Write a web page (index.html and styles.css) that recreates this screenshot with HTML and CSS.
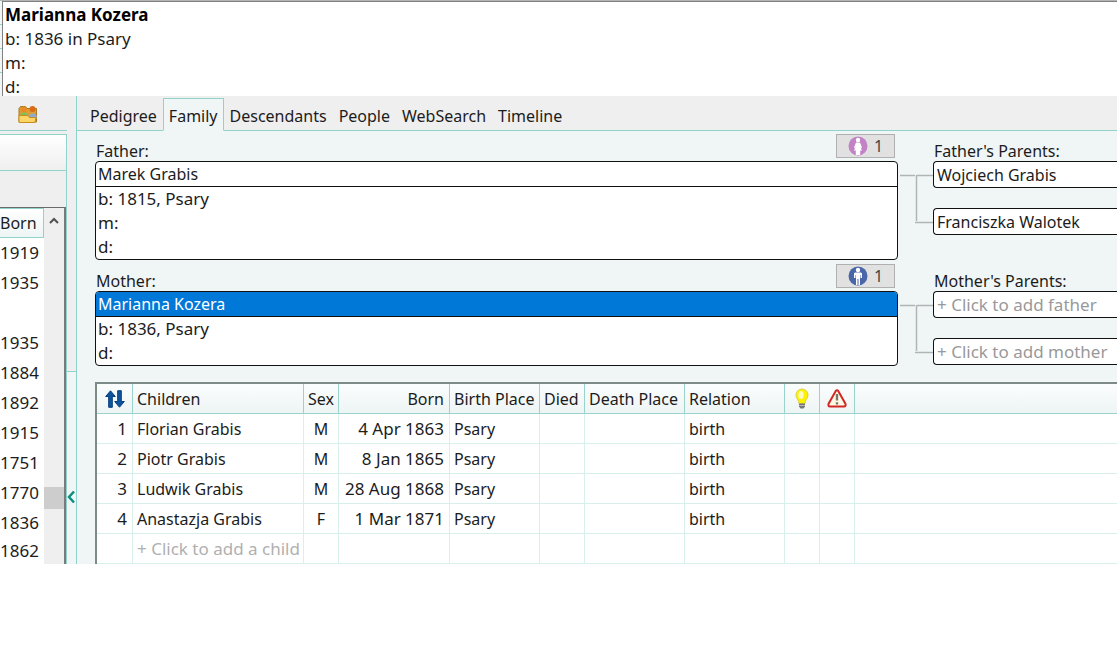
FILE: index.html
```html
<!DOCTYPE html>
<html lang="en">
<head>
<meta charset="utf-8">
<title>Family view</title>
<link rel="stylesheet" href="styles.css">
</head>
<body>
<header class="summary">
  <div class="ticks"><i></i><i></i><i></i></div>
  <div class="person">
    <strong>Marianna Kozera</strong>
    <span>b: 1836 in Psary</span>
    <span>m:</span>
    <span>d:</span>
  </div>
</header>
<div class="workspace">
  <aside class="index">
    <div class="tools">
      <button class="icon-button" aria-label="Open group">
        <svg width="20" height="19" viewBox="0 0 20 19">
          <path d="M1 17V3.500L2.500 1.500h5L9 3.500h9.500V17z" fill="#d9a03a" stroke="#a87822"/>
          <circle cx="6" cy="4.500" r="3" fill="#e98a22"/>
          <circle cx="14.500" cy="4" r="3" fill="#d96c18"/>
          <path d="M2 11.500c0-5.500 8-5.500 8 0z" fill="#7cc05a"/>
          <path d="M10.500 13c0-6 8.500-6 8.500 0z" fill="#8fabd0"/>
          <path d="M1 10.500h9l1.500 2H18L17 17.500H1z" fill="#fbd568" stroke="#c98d1c"/>
        </svg>
      </button>
    </div>
    <div class="list-panel">
      <div class="list-title"></div>
      <div class="list-gap"></div>
      <div class="list-box">
        <table class="years">
          <thead><tr><th>Born</th></tr></thead>
          <tbody>
            <tr><td>1919</td></tr><tr><td>1935</td></tr><tr><td></td></tr><tr><td>1935</td></tr>
            <tr><td>1884</td></tr><tr><td>1892</td></tr><tr><td>1915</td></tr><tr><td>1751</td></tr>
            <tr><td>1770</td></tr><tr><td>1836</td></tr><tr><td>1862</td></tr>
          </tbody>
        </table>
        <div class="scrollbar">
          <svg width="12" height="8" viewBox="0 0 12 8"><path d="M2 7l4-4 4 4" fill="none" stroke="#505050" stroke-width="2"/></svg>
          <div class="thumb"></div>
        </div>
      </div>
    </div>
  </aside>
  <div class="splitter">
    <button class="collapse" aria-label="Collapse index">
      <svg width="9" height="14" viewBox="0 0 9 14"><path d="M7 1.500L2 7l5 5.500" fill="none" stroke="#0b8f80" stroke-width="2.500"/></svg>
    </button>
  </div>
  <main class="main">
    <nav class="tabs">
      <button>Pedigree</button><button class="active">Family</button><button>Descendants</button><button>People</button><button>WebSearch</button><button>Timeline</button>
    </nav>
    <div class="family">
      <section class="couple">
        <div class="parent">
          <div class="label-row"><h2>Father:</h2>
            <button class="count"><svg width="20" height="20" viewBox="0 0 20 20"><circle cx="10" cy="10" r="9.500" fill="#c183c6"/><circle cx="10" cy="4" r="2.200" fill="#fff"/><path d="M8 6.500h4l2 5-1 .5-1-2 2 4.500h-1.800V19H7.800v-4.500H6l2-4.500-1 2-1-.5z" fill="#fff"/></svg>1</button>
          </div>
          <div class="card"><button class="name">Marek Grabis</button><p>b: 1815, Psary</p><p>m:</p><p>d:</p></div>
        </div>
        <svg class="links" width="35" height="63" viewBox="0 0 35 63"><path d="M2 14.500h15M19 14.500h16M18.500 14v46M17 61.500h18" fill="none" stroke="#b0b4b4" stroke-width="1.500"/></svg>
        <div class="grandparents">
          <div class="label-row"><h2>Father's Parents:</h2></div>
          <button class="slot">Wojciech Grabis</button>
          <button class="slot">Franciszka Walotek</button>
        </div>
      </section>
      <section class="couple">
        <div class="parent">
          <div class="label-row"><h2>Mother:</h2>
            <button class="count"><svg width="20" height="20" viewBox="0 0 20 20"><circle cx="10" cy="10" r="9.500" fill="#4967a8"/><circle cx="10" cy="4" r="2.200" fill="#fff"/><path d="M7 6.500h6l1 1V12h-1.500V9H12v10h-1.500v-6h-1v6H8V9h-.5v3H6V7.500z" fill="#fff"/></svg>1</button>
          </div>
          <div class="card"><button class="name selected">Marianna Kozera</button><p>b: 1836, Psary</p><p>d:</p></div>
        </div>
        <svg class="links" width="35" height="63" viewBox="0 0 35 63"><path d="M2 14.500h15M19 14.500h16M18.500 14v46M17 61.500h18" fill="none" stroke="#b0b4b4" stroke-width="1.500"/></svg>
        <div class="grandparents">
          <div class="label-row"><h2>Mother's Parents:</h2></div>
          <button class="slot add">+ Click to add father</button>
          <button class="slot add">+ Click to add mother</button>
        </div>
      </section>
      <table class="children">
        <colgroup><col class="c-num"><col class="c-name"><col class="c-icon"><col class="c-born"><col class="c-place"><col class="c-died"><col class="c-wide"><col class="c-wide"><col class="c-icon"><col class="c-icon"><col></colgroup>
        <thead><tr>
          <th class="icon"><svg width="20" height="18" viewBox="0 0 20 18"><path d="M5.500.8L10.300 6.500H7.300V17.300H3.700V6.500H.7z" fill="#0b55a0" stroke="#073d78"/><path d="M14.500 17.200L9.700 11.500h3V.7h3.600v10.800h3z" fill="#0b55a0" stroke="#073d78"/></svg></th>
          <th>Children</th><th class="mid">Sex</th><th class="end">Born</th><th>Birth Place</th><th>Died</th><th>Death Place</th><th>Relation</th>
          <th class="icon"><svg width="14" height="22" viewBox="0 0 14 22"><path d="M4 15.500C4 12 1 10.500 1 7a6 6 0 0 1 12 0c0 3.500-3 5-3 8.500z" fill="#fff200" stroke="#d8cf48"/><ellipse cx="6" cy="7" rx="2.500" ry="4" fill="#fffcc2"/><path d="M4 15.500h6v3l-1.500 2h-3L4 18.500z" fill="#777"/><path d="M4 17.500h6" stroke="#bbb"/></svg></th>
          <th class="icon"><svg width="20" height="19" viewBox="0 0 20 19"><path d="M8.600 2.200q1.400-1.700 2.800 0l7 12.500q.8 2.800-1.400 2.800H3q-2.200 0-1.400-2.800z" fill="#fffbe6" stroke="#d32626" stroke-width="2"/><path d="M10 5v6.500M10 13.200v2.300" stroke="#77776a" stroke-width="2.400"/></svg></th>
          <th></th>
        </tr></thead>
        <tbody>
          <tr><td class="end">1</td><td>Florian Grabis</td><td class="mid">M</td><td class="end">4 Apr 1863</td><td>Psary</td><td></td><td></td><td>birth</td><td></td><td></td><td></td></tr>
          <tr><td class="end">2</td><td>Piotr Grabis</td><td class="mid">M</td><td class="end">8 Jan 1865</td><td>Psary</td><td></td><td></td><td>birth</td><td></td><td></td><td></td></tr>
          <tr><td class="end">3</td><td>Ludwik Grabis</td><td class="mid">M</td><td class="end">28 Aug 1868</td><td>Psary</td><td></td><td></td><td>birth</td><td></td><td></td><td></td></tr>
          <tr><td class="end">4</td><td>Anastazja Grabis</td><td class="mid">F</td><td class="end">1 Mar 1871</td><td>Psary</td><td></td><td></td><td>birth</td><td></td><td></td><td></td></tr>
          <tr><td></td><td><button class="add">+ Click to add a child</button></td><td></td><td></td><td></td><td></td><td></td><td></td><td></td><td></td><td></td></tr>
        </tbody>
      </table>
    </div>
  </main>
</div>
</body>
</html>
```

FILE: styles.css
```css
* { box-sizing: border-box; }
body { margin: 0; background: #fff; color: #1c1c1c; font: 16px/24px "Noto Sans", "Open Sans", sans-serif; }
button { margin: 0; padding: 0; border: 0; background: none; color: inherit; font: inherit; text-align: left; white-space: nowrap; }
svg { display: block; flex: none; }
h2 { margin: 0; font-size: 16px; font-weight: 400; }
p { margin: 0; font-size: 17px; }

.summary { display: flex; border-top: 1px solid #b4b4b4; }
.ticks { width: 2px; background: #f0f6f6; }
.ticks i { display: block; height: 24px; border-bottom: 1px solid #8fd3cb; }
.person { flex: 1; display: flex; flex-direction: column; height: 95px; padding: 1px 0 0 2px; border-top: 1px solid #808080; border-left: 1px solid #808080; overflow: hidden; font-size: 17px; }
.person > * { flex: none; }
.person strong { color: #000; }

.workspace { display: flex; background: #efefef; overflow: hidden; }
.index { display: flex; flex-direction: column; width: 67px; }
.tools { display: flex; align-items: flex-start; height: 35px; padding: 9px 0 0 18px; border-bottom: 1px solid #8fd3cb; }
.list-panel { flex: 1; display: flex; flex-direction: column; margin-top: 3px; border-top: 1px solid #8fd3cb; border-right: 1px solid #8fd3cb; }
.list-title { height: 36px; background: linear-gradient(#fff, #efefef); border-bottom: 1px solid #8fd3cb; }
.list-gap { height: 36px; }
.list-box { flex: 1; display: flex; align-items: flex-start; border-top: 1px solid #6b6b6b; border-right: 2px solid #7b7b7b; background: #fff; }
.years { width: 44px; border-collapse: separate; border-spacing: 0; }
.years th { height: 30px; padding: 0; font-weight: 400; text-align: left; background: linear-gradient(#fff, #edf5f4); border: 1px solid #8fd3cb; border-left: 0; }
.years td { height: 30px; padding: 0; font-size: 17px; }
.years tr:last-child td { height: 26px; }
.scrollbar { flex: 1; align-self: stretch; display: flex; flex-direction: column; align-items: center; gap: 263px; padding-top: 8px; background: #efefef; }
.thumb { width: 100%; height: 22px; background: #cdcdcd; }

.splitter { display: flex; flex-direction: column; justify-content: flex-end; width: 10px; border-right: 1px solid #8fd3cb; }
.collapse { display: flex; align-items: center; height: 193px; padding-top: 58px; background: #f0f6f6; border-top: 1px solid #8fd3cb; }

.main { flex: 1; min-width: 0; }
.tabs { display: flex; height: 35px; padding: 2px 0 0 7px; border-bottom: 1px solid #8fd3cb; }
.tabs button { height: 33px; padding: 2px 5px 0; border: 1px solid transparent; }
.tabs .active { background: #f0f6f6; border-color: #8fd3cb; border-bottom-color: #f0f6f6; }
.family { background: #f0f6f6; padding-left: 18px; }
.couple { display: flex; }
.couple + .couple { padding-top: 1px; }
.parent { flex: 1; }
.label-row { display: flex; justify-content: space-between; align-items: center; height: 30px; padding: 0 3px 0 1px; }
.label-row h2 { padding-top: 10px; }
.count { display: flex; align-items: center; gap: 6px; width: 59px; height: 24px; padding-left: 11px; background: #e1e1e1; border: 1px solid #b0b0b0; color: #444; }
.card { overflow: hidden; background: #fff; border: 1px solid #111; border-radius: 4px; }
.name { display: block; width: 100%; height: 25px; padding-left: 2px; border-bottom: 1px solid #111; }
.card p { padding-left: 2px; }
.selected { background: #0078d7; color: #fff; }
.links { margin-top: 30px; }
.grandparents { width: 184px; }
.slot { display: block; width: 100%; height: 27px; padding-left: 3px; background: #fff; border: 1px solid #111; border-right: 0; border-radius: 4px 0 0 4px; }
.slot + .slot { margin-top: 20px; }
.add { color: #999; font-size: 17px; }

.children { width: 100%; margin-top: 16px; table-layout: fixed; border-collapse: separate; border-spacing: 0; background: #fff; border-top: 2px solid #7d8a88; border-left: 2px solid #7d8a88; }
.children th, .children td { height: 30px; padding: 0 4px; font-weight: 400; line-height: 24px; text-align: left; white-space: nowrap; border-right: 1px solid #d8f0ec; border-bottom: 1px solid #d8f0ec; }
.children th { background: linear-gradient(#fbfdfd, #edf5f4); border-color: #9ad3cc; }
.children tr > :last-child { border-right: 0; }
.children .end { text-align: right; padding-right: 5px; }
.children td.end { font-size: 17px; }
.children .mid { text-align: center; padding: 0; }
.children .icon { padding: 0; }
.icon svg { margin: 0 auto; }
.children .add { display: block; color: #b0b0b0; }
.c-num { width: 36px; }
.c-name { width: 171px; }
.c-icon { width: 35px; }
.c-born { width: 111px; }
.c-place { width: 90px; }
.c-died { width: 45px; }
.c-wide { width: 100px; }
```
